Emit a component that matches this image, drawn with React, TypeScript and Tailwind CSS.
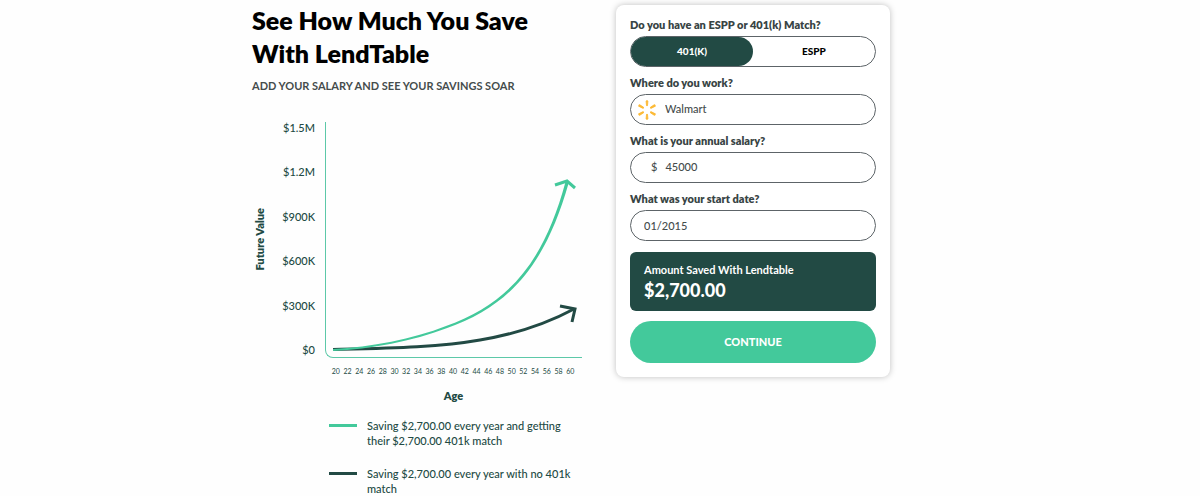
import { useState } from "react"

const MATCH_TYPES = ["401(K)", "ESPP"]

const Y_LABELS = ["$1.5M", "$1.2M", "$900K", "$600K", "$300K", "$0"]

const AGES = Array.from({ length: 21 }, (_, i) => 20 + i * 2)

const LEGEND = [
  { color: "bg-[#43c99b]", text: "Saving $2,700.00 every year and getting their $2,700.00 401k match" },
  { color: "bg-[#224a44]", text: "Saving $2,700.00 every year with no 401k match" },
]

const SPARK_ANGLES = [0, 60, 120, 180, 240, 300]

function SparkLogo() {
  return (
    <svg viewBox="0 0 20 20" className="w-5 h-5 shrink-0" aria-hidden="true">
      {SPARK_ANGLES.map((angle) => (
        <path
          key={angle}
          d="M9.100 1 Q10 0.200 10.900 1 L10.500 5.600 Q10 6.400 9.500 5.600 Z"
          fill="#fcb934"
          stroke="#fcb934"
          strokeWidth="0.900"
          transform={`rotate(${angle} 10 10)`}
        />
      ))}
    </svg>
  )
}

function SavingsChart() {
  return (
    <div>
      <div className="flex">
        <div className="w-4 flex items-center justify-center">
          <span className="[writing-mode:vertical-rl] rotate-180 text-[11px] leading-4 font-extrabold whitespace-nowrap">
            Future Value
          </span>
        </div>
        <div className="w-[57px] pr-[10px] flex flex-col justify-between text-right text-[11px] leading-5 font-medium">
          {Y_LABELS.map((label) => (
            <span key={label}>{label}</span>
          ))}
        </div>
        <div className="flex-1 pt-1 pb-[2px]">
          <div className="border-l border-b border-[#5cc8a8] rounded-bl-lg">
            <svg viewBox="0 0 256 235" className="block w-full overflow-visible" fill="none" role="img" aria-label="Future value by age">
              <g stroke="#224a44" strokeWidth="3">
                <path d="M7 227.500 C65 226 115 225 154 218 C190 212 220 202 248 187" />
                <path d="M234 184 L249 187 L246 200" />
              </g>
              {/* widens towards the arrow head */}
              <path
                d="M7 227 C45 225 87 217 120 204 C184 181 218 139 239.500 60 L242.800 60.500 C220 141 185 184 120.500 206.200 C87 219 45 227 7 229 Z"
                fill="#43c99b"
              />
              <path d="M229 63 L241 59 L249 66" stroke="#43c99b" strokeWidth="3" />
            </svg>
          </div>
        </div>
      </div>
      <div className="pl-[78px] pr-[6px] mt-[6px] flex text-[7px] leading-[10px]">
        {AGES.map((age) => (
          <span key={age} className="flex-1 text-center">{age}</span>
        ))}
      </div>
      <p className="pl-[73px] mt-3 text-center text-[11px] leading-4 font-extrabold">Age</p>
    </div>
  )
}

export default function App() {
  const [matchType, setMatchType] = useState("401(K)")
  const [employer, setEmployer] = useState("Walmart")
  const [salary, setSalary] = useState("45000")
  const [startDate, setStartDate] = useState("01/2015")

  return (
    <div className="bg-[#fefefe] font-[Lato,sans-serif] text-[#224a44]">
      <div className="max-w-[696px] mx-auto pt-[5px] flex items-start gap-[34px]">
        <section className="w-[330px] -mt-px">
          <h1 className="text-[25px] leading-[33px] font-extrabold text-black">
            See How Much You Save
            <br />
            With LendTable
          </h1>
          <p className="mt-2 mb-6 text-[11px] leading-4 font-bold text-[#454c4c]">
            ADD YOUR SALARY AND SEE YOUR SAVINGS SOAR
          </p>
          <SavingsChart />
          <ul className="pl-[77px] mt-[14px] flex flex-col gap-[18px]">
            {LEGEND.map((item) => (
              <li key={item.text} className="flex gap-[10px] text-[11px] leading-[15px] font-medium">
                <span className={`mt-[6px] w-7 h-[3px] shrink-0 ${item.color}`} />
                <span>{item.text}</span>
              </li>
            ))}
          </ul>
        </section>

        <form
          className="w-[274px] px-[14px] pt-3 pb-[14px] bg-white rounded-lg shadow-[0_0_6px_rgba(0,0,0,0.25)] flex flex-col gap-[10px] text-[11px]"
          onSubmit={(e) => e.preventDefault()}
        >
          <div className="flex flex-col gap-2 pb-px">
            <div role="group" aria-labelledby="match-label">
              <p id="match-label" className="mb-1 leading-[15px] font-extrabold text-[#384444]">
                Do you have an ESPP or 401(k) Match?
              </p>
              <div className="h-[31px] flex border border-[#5d6468] rounded-full">
                {MATCH_TYPES.map((type) => (
                  <button
                    key={type}
                    type="button"
                    aria-pressed={matchType === type}
                    onClick={() => setMatchType(type)}
                    className={`flex-1 rounded-full text-[10px] font-black ${matchType === type ? "bg-[#224a44] text-white" : "text-black"}`}
                  >
                    {type}
                  </button>
                ))}
              </div>
            </div>

            <div>
              <label htmlFor="employer" className="block mb-1 leading-[15px] font-extrabold text-[#384444]">
                Where do you work?
              </label>
              <div className="h-[31px] pl-[6px] pr-3 flex items-center gap-2 border border-[#5d6468] rounded-full">
                <SparkLogo />
                <input
                  id="employer"
                  value={employer}
                  onChange={(e) => setEmployer(e.target.value)}
                  className="min-w-0 flex-1 outline-none font-medium text-[#454c4c]"
                />
              </div>
            </div>

            <div>
              <label htmlFor="salary" className="block mb-1 leading-[15px] font-extrabold text-[#384444]">
                What is your annual salary?
              </label>
              <div className="h-[31px] pl-5 pr-3 flex items-center gap-2 border border-[#5d6468] rounded-full font-medium text-[#454c4c]">
                <span>$</span>
                <input
                  id="salary"
                  inputMode="numeric"
                  value={salary}
                  onChange={(e) => setSalary(e.target.value)}
                  className="min-w-0 flex-1 outline-none"
                />
              </div>
            </div>

            <div>
              <label htmlFor="start-date" className="block mb-1 leading-[15px] font-extrabold text-[#384444]">
                What was your start date?
              </label>
              <input
                id="start-date"
                value={startDate}
                onChange={(e) => setStartDate(e.target.value)}
                className="w-full h-[31px] px-[13px] border border-[#5d6468] rounded-full outline-none font-medium text-[#454c4c]"
              />
            </div>
          </div>

          <div className="px-[14px] py-[9px] bg-[#224a44] rounded-md text-white">
            <p className="leading-[17px] font-bold">Amount Saved With Lendtable</p>
            <p className="text-lg leading-6 font-black">$2,700.00</p>
          </div>

          <button type="submit" className="h-[42px] rounded-full bg-[#43c99b] text-[11px] font-black text-white">
            CONTINUE
          </button>
        </form>
      </div>
    </div>
  )
}
